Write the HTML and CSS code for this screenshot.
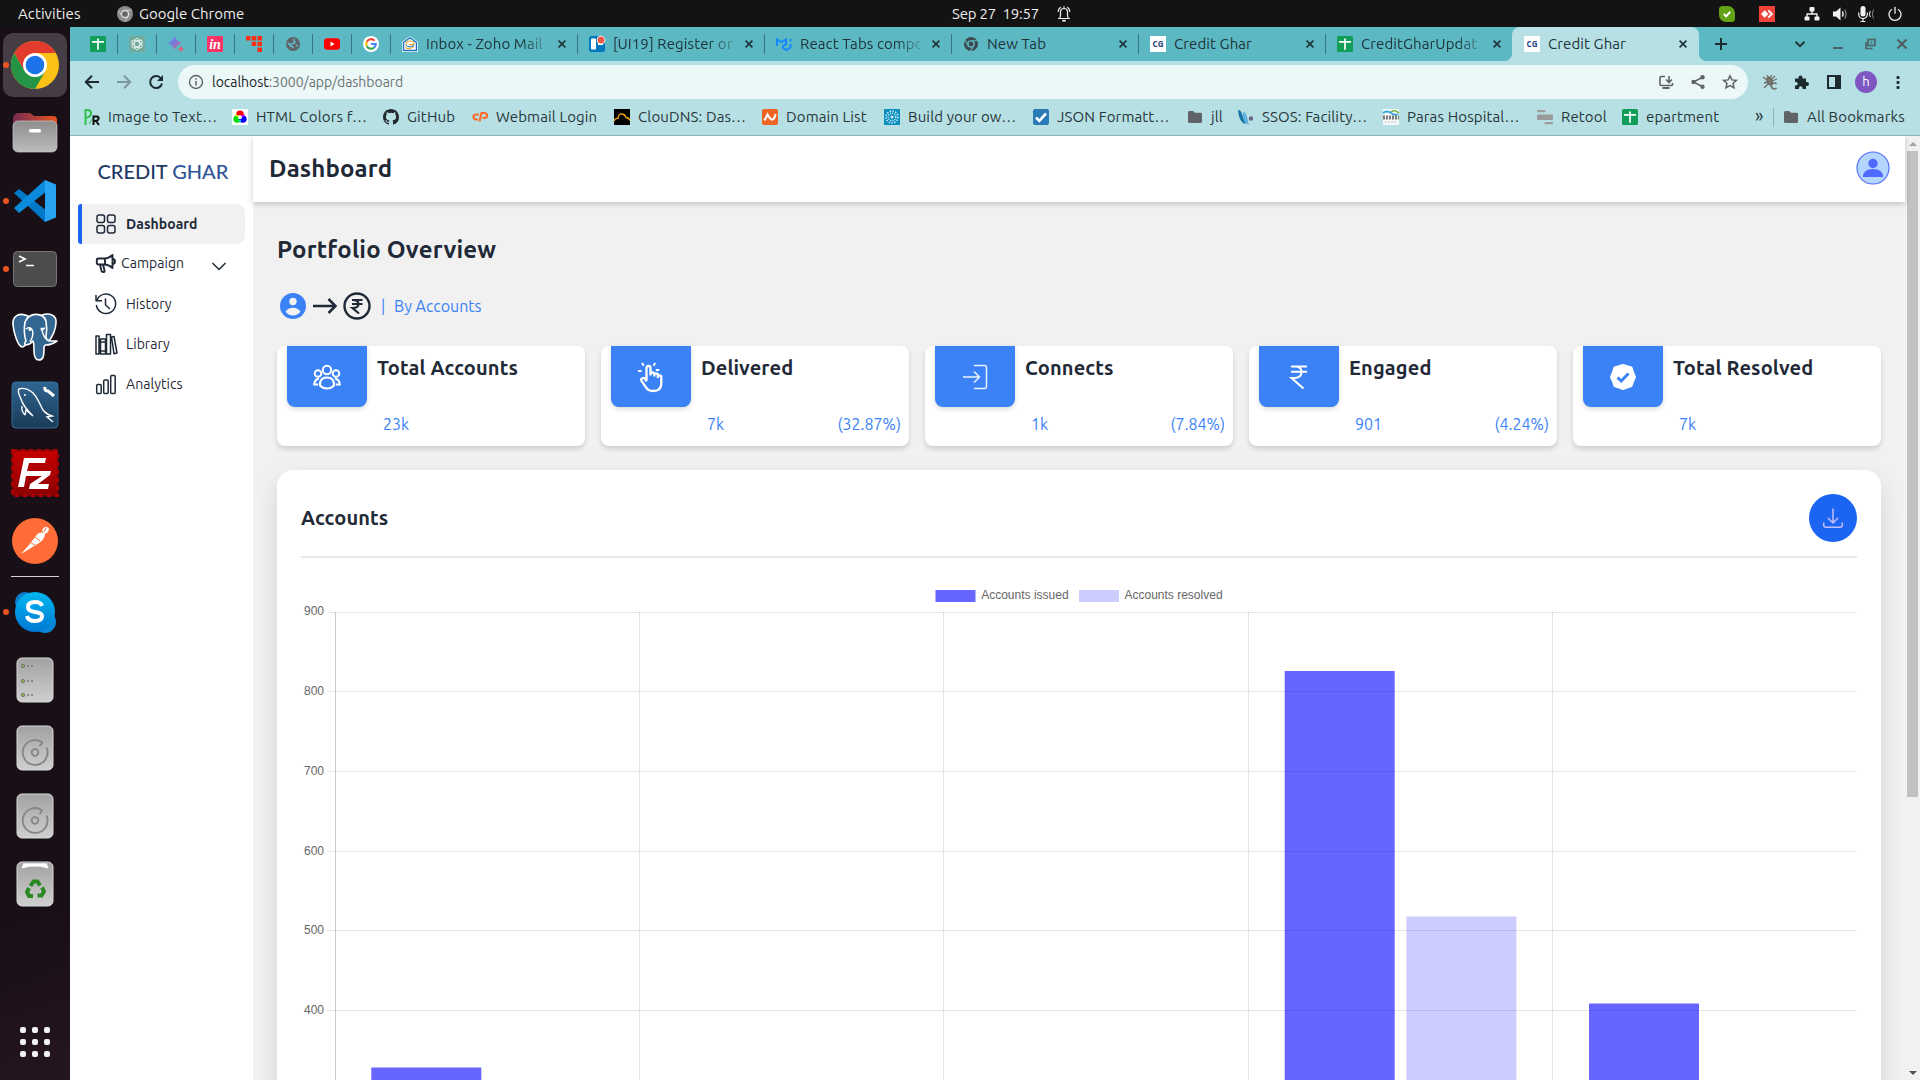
FILE: index.html
```html
<!DOCTYPE html>
<html lang="en">
<head>
<meta charset="utf-8">
<title>Credit Ghar</title>
<link rel="stylesheet" href="styles.css">
</head>
<body>
<svg class="sprite" aria-hidden="true">
  <defs>
    <linearGradient id="g-grey" x1="0" y1="0" x2="0" y2="1"><stop offset="0" stop-color="#a2a2a2"/><stop offset="1" stop-color="#cfcfcf"/></linearGradient>
    <linearGradient id="g-file" x1="0" y1="0" x2="0" y2="1"><stop offset="0" stop-color="#8d8d8d"/><stop offset="1" stop-color="#bcbcbc"/></linearGradient>
    <linearGradient id="g-fold" x1="0" y1="0" x2="1" y2="0"><stop offset="0" stop-color="#762b50"/><stop offset="1" stop-color="#e95420"/></linearGradient>
    <linearGradient id="g-sky" x1="0" y1="0" x2="0" y2="1"><stop offset="0" stop-color="#00b7f0"/><stop offset="1" stop-color="#0078d4"/></linearGradient>
    <linearGradient id="g-my" x1="0" y1="0" x2="0" y2="1"><stop offset="0" stop-color="#2f6592"/><stop offset="1" stop-color="#1a3b57"/></linearGradient>
    <linearGradient id="g-fz" x1="0" y1="0" x2="0" y2="1"><stop offset="0" stop-color="#c80000"/><stop offset="1" stop-color="#8c0000"/></linearGradient>
    <linearGradient id="g-bard" x1="0" y1="0" x2="1" y2="1"><stop offset="0" stop-color="#5b8def"/><stop offset=".5" stop-color="#7d79d8"/><stop offset="1" stop-color="#e0637a"/></linearGradient>
    <symbol id="sheet" viewBox="0 0 16 16"><rect width="16" height="16" rx="1.5" fill="#0f9d58"/><path d="M2 5.900h12M8 2.500v11.300" stroke="#fff" stroke-width="1.700"/></symbol>
    <symbol id="cg" viewBox="0 0 16 16"><rect width="16" height="16" fill="#fff"/><text x="8" y="10.600" font-size="8" font-weight="700" text-anchor="middle" fill="#2a4580" font-family="Open Sans, sans-serif">CG</text></symbol>
    <symbol id="close" viewBox="0 0 16 16"><path d="M4.600 4.600l6.800 6.800M11.400 4.600l-6.800 6.800" stroke="#20343a" stroke-width="1.700" fill="none"/></symbol>
    <symbol id="folder" viewBox="0 0 16 16"><path d="M1 3.500Q1 2 2.500 2h3.700l1.600 1.800h5.700Q15 3.800 15 5.200v7.300q0 1.500-1.500 1.500h-11Q1 14 1 12.500z" fill="#5f6368"/></symbol>
    <symbol id="disk" viewBox="0 0 48 48"><rect x="6" y="2" width="36" height="44" rx="5" fill="url(#g-grey)" stroke="#dadada"/><path d="M31.500 18.500a12.400 12.400 0 1 0 4 5" fill="none" stroke="#858585" stroke-width="1.800"/><circle cx="24" cy="28.500" r="3.300" fill="none" stroke="#858585" stroke-width="1.800"/><path d="M28.500 22l3-3.500" stroke="#858585" stroke-width="1.800"/></symbol>
  </defs>
</svg>

<header class="topbar">
  <span class="tb-activities">Activities</span>
  <svg class="i16" viewBox="0 0 16 16"><circle cx="8" cy="8" r="8" fill="#8b8b8b"/><circle cx="8" cy="8" r="3.600" fill="#666" stroke="#ddd" stroke-width="1.500"/><path d="M8 4.200h7M4.800 10L1.500 4.500M11.300 10L8 16" stroke="#ccc" fill="none"/></svg>
  <span class="tb-app">Google Chrome</span>
  <span class="tb-clock">Sep 27&nbsp; 19:57</span>
  <svg class="tb-bell" viewBox="0 0 16 16" fill="none" stroke="#eee" stroke-width="1.200"><path d="M2 12.500h12M3.500 12.500Q4.500 11 4.500 9V6a3.500 3.500 0 0 1 7 0V9q0 2 1 3.500M7 1h2M2.200 6Q2.500 2.500 4.800 1M13.800 6Q13.500 2.500 11.200 1"/><path d="M6.300 14.700h3.400" stroke-width="1.800"/></svg>
  <div class="tray">
    <svg class="i16 t1" viewBox="0 0 16 16"><path d="M3.500 0h6A7 7 0 0 1 16 7v5.500A3.500 3.500 0 0 1 12.500 16H7A7 7 0 0 1 0 9V3.500A3.500 3.500 0 0 1 3.500 0z" fill="#64a316"/><path d="M4.800 8l2.300 2.300 4.200-4.400" fill="none" stroke="#fff" stroke-width="2"/></svg>
    <svg class="i16 t2" viewBox="0 0 16 16"><rect width="16" height="16" fill="#ef443b"/><path d="M5.700 4.300L9.400 8l-3.700 3.700L2 8z" fill="#fff"/><path d="M9.200 4.300L12.900 8l-3.700 3.700" fill="none" stroke="#fff" stroke-width="1.800"/></svg>
    <svg class="i16 t3" viewBox="0 0 16 16" fill="#f2f2f2"><rect x="5.500" y="1" width="5" height="4.500" rx="1"/><rect x=".5" y="10.500" width="5" height="4" rx="1"/><rect x="10.500" y="10.500" width="5" height="4" rx="1"/><path d="M8 5v3M3 11V8h10v3" fill="none" stroke="#f2f2f2" stroke-width="1.300"/></svg>
    <svg class="i16 t4" viewBox="0 0 16 16"><path d="M1 5.500h3L8.500 1.500v13L4 10.500H1z" fill="#f2f2f2"/><path d="M10.300 5.300q1.800 2.700 0 5.400" stroke="#f2f2f2" stroke-width="1.300" fill="none"/><path d="M12.600 3.500q3 4.500 0 9" stroke="#888" stroke-width="1.200" fill="none"/></svg>
    <svg class="i16 t5" viewBox="0 0 16 16"><rect x="2.500" y="0" width="5" height="10.500" rx="2.500" fill="#f2f2f2"/><path d="M.7 6.500v1.800a4.300 4.300 0 0 0 8.600 0V6.500M5 12.500v3M2.500 15.500h5" stroke="#f2f2f2" stroke-width="1.200" fill="none"/><path d="M12.300 5q-1.800 3 0 6" stroke="#f2f2f2" fill="none"/><path d="M15.500 3.500q-2.500 4.500 0 9" stroke="#888" fill="none"/></svg>
    <svg class="i16" viewBox="0 0 16 16" fill="none" stroke="#f2f2f2" stroke-width="1.300"><path d="M5 3.200a6 6 0 1 0 6 0M8 .8v7"/></svg>
  </div>
</header>

<div class="desktop">
  <aside class="dock">
    <div class="dock-item active running"><svg viewBox="0 0 48 48"><circle cx="24" cy="24" r="24" fill="#fbc116"/><path d="M24 12h20.800A24 24 0 0 0 3.200 12L13.600 30z" fill="#e33b2e"/><path d="M3.200 12A24 24 0 0 0 24 48l10.400-18L13.600 30z" fill="#269447"/><circle cx="24" cy="24" r="12" fill="#fff"/><circle cx="24" cy="24" r="9.300" fill="#1a73e8"/></svg></div>
    <div class="dock-item"><svg viewBox="0 0 48 48"><path d="M2 10a6 6 0 0 1 5-6h12l4 3h19a4 4 0 0 1 4 4v20H2z" fill="url(#g-fold)"/><rect x="2" y="12" width="44" height="31" rx="5" fill="url(#g-file)" stroke="#c9c9c9" stroke-width=".7"/><rect x="18" y="20" width="12" height="3.500" rx="1.500" fill="#fff"/></svg></div>
    <div class="dock-item running"><svg viewBox="0 0 48 48"><path d="M34 45L3 16l5-4 28 22z" fill="#0078c8"/><path d="M34 3L3 31l5 5 28-22z" fill="#0a8bdc"/><path d="M34 3l11 4.500v33L34 45z" fill="#27a3f0"/></svg></div>
    <div class="dock-item running"><svg viewBox="0 0 48 48"><rect x="2.500" y="6.500" width="43" height="35" rx="4" fill="#4c4c4c" stroke="#777"/><path d="M8 11l6 3-6 3M15 20.500h8" fill="none" stroke="#fff" stroke-width="1.700"/></svg></div>
    <div class="dock-item"><svg viewBox="0 0 48 48" stroke="#fff" stroke-width="1.600" stroke-linejoin="round" fill="#336791"><path d="M17 3C8-1 1 3 2 12c1 9 5 21 9 22 3 0 6-5 8-7z"/><path d="M31 2c8-3 15 1 14 8-.5 7-4 14-7 18l-5-2z"/><path d="M14 9C18-1 32-1 35 8c1 6 1 11 0 16 0 5 6 4 11 4-4 3-7 4-11 4-1 0-2 1-2 3 0 9-1 12-5 12-3 0-5-2-5-9 0-4 0-8-1-10-5 6-11 4-7 0-2-6-2-13-1-19z"/><path d="M15 16c7-5 9 5 4 13M34 15c-5 1-2 7 1 11" fill="none" stroke-width="1.400"/><circle cx="19" cy="16.500" r=".8"/><circle cx="31" cy="16" r=".8"/></svg></div>
    <div class="dock-item"><svg viewBox="0 0 48 48"><rect x="1" y="1" width="46" height="46" rx="4" fill="url(#g-my)" stroke="#30709f"/><path d="M14 34l1-5 7 6C17 30 11 22 10 18c-2-4-4-8-2-10 5-2 11 1 14 4 5 5 7 12 10 17q3 4 9 6l-5 1 6 5M14 34q-4-4-3-9" fill="none" stroke="#fff" stroke-width="1.400"/><circle cx="14" cy="14" r="1" fill="#fff"/><path d="M34 6q-1 4 3 4l6 5" fill="none" stroke="#fff" stroke-width="3"/></svg></div>
    <div class="dock-item"><svg viewBox="0 0 48 48"><rect x="1.500" y="1.500" width="45" height="45" fill="url(#g-fz)" stroke="#a80000" stroke-width="3" stroke-dasharray="5 3"/><path d="M13 9h22l-1 5H18l-2 8h13l-1 5H15l-2 11H7z" fill="#fff"/><path d="M22 22h18l-1 4-12 9h11l-1 5H18l1-5 12-8H21z" fill="#fff"/></svg></div>
    <div class="dock-item"><svg viewBox="0 0 48 48"><circle cx="24" cy="24" r="23" fill="#ff6c37"/><path d="M38 12a3.500 3.500 0 1 0-5 4.500q-3-2.500-7 1L18 28l-8 9 10-6 8-5q6-4 6-9.500 3 0 4-4.500z" fill="#fff"/><path d="M24 20l5 4M20 26l4 2M35 11l-2 4" stroke="#ff6c37"/></svg></div>
    <div class="dock-sep"></div>
    <div class="dock-item running"><svg viewBox="0 0 48 48"><circle cx="14" cy="14" r="10" fill="#0a7cc9"/><circle cx="34" cy="34" r="11" fill="#0a86d8"/><circle cx="24" cy="24" r="20" fill="url(#g-sky)"/><path d="M31 18q-1-4-7-4-7 0-7 5 0 4 7 5t7 4q0 5-7 5t-8-5" fill="none" stroke="#fff" stroke-width="4"/></svg></div>
    <div class="dock-item"><svg viewBox="0 0 48 48"><rect x="6" y="2" width="36" height="44" rx="5" fill="url(#g-grey)" stroke="#dadada"/><g fill="#8bb04a" stroke="#777"><circle cx="12" cy="10" r="1.700"/><circle cx="12" cy="25" r="1.700"/><circle cx="12" cy="39" r="1.700"/></g><path d="M16 10h6M16 25h6M16 39h6" stroke="#777" stroke-width="1.700" stroke-dasharray="2 2"/></svg></div>
    <div class="dock-item"><svg><use href="#disk"/></svg></div>
    <div class="dock-item"><svg><use href="#disk"/></svg></div>
    <div class="dock-item"><svg viewBox="0 0 48 48"><rect x="6" y="2" width="36" height="44" rx="5" fill="url(#g-grey)" stroke="#dadada"/><path d="M10 9l2-6h24l2 6-9-2H19z" fill="#fff" stroke="#999" stroke-width=".6"/><g fill="none" stroke="#2a8a22" stroke-width="4"><path d="M19.500 26l3-4.500h4l2.500 4"/><path d="M31 27.500l2 4-2.500 4h-4"/><path d="M22 36h-4l-2-4 2-4"/></g></svg></div>
    <div class="dock-item apps"><svg viewBox="0 0 48 48" fill="#f2f2f2"><rect x="9" y="9" width="6" height="6" rx="2"/><rect x="21" y="9" width="6" height="6" rx="2"/><rect x="33" y="9" width="6" height="6" rx="2"/><rect x="9" y="21" width="6" height="6" rx="2"/><rect x="21" y="21" width="6" height="6" rx="2"/><rect x="33" y="21" width="6" height="6" rx="2"/><rect x="9" y="33" width="6" height="6" rx="2"/><rect x="21" y="33" width="6" height="6" rx="2"/><rect x="33" y="33" width="6" height="6" rx="2"/></svg></div>
  </aside>

  <div class="browser">
    <nav class="tabs">
      <div class="tab pinned"><svg class="i16"><use href="#sheet"/></svg></div>
      <div class="tab pinned"><svg class="i16" viewBox="0 0 16 16"><rect width="16" height="16" rx="1.500" fill="#74aa9c"/><g fill="none" stroke="#e8f4f1" stroke-width=".9"><ellipse cx="8" cy="8" rx="2.800" ry="5.700"/><ellipse cx="8" cy="8" rx="2.800" ry="5.700" transform="rotate(60 8 8)"/><ellipse cx="8" cy="8" rx="2.800" ry="5.700" transform="rotate(120 8 8)"/></g></svg></div>
      <div class="tab pinned"><svg class="i16" viewBox="0 0 16 16" fill="url(#g-bard)"><path d="M6.500 0Q8.500 5 13.500 7 8.500 9 6.500 13.500 4.500 9 0 7 4.500 5 6.500 0z"/><path d="M13 10q.9 2.100 3 3-2.100.9-3 3-.9-2.100-3-3 2.100-.9 3-3z" fill="#d9657f"/></svg></div>
      <div class="tab pinned"><svg class="i16" viewBox="0 0 16 16"><rect width="16" height="16" rx="1" fill="#ff3366"/><text x="8" y="12.500" text-anchor="middle" font-size="14" font-weight="700" font-style="italic" fill="#fff" font-family="Liberation Serif, serif">in</text></svg></div>
      <div class="tab pinned"><svg class="i16" viewBox="0 0 16 16" fill="#ff2d17"><path d="M0 0h4.500v4.500H0zM5.700 0h4.500v4.500H5.700zM11.400 0H16v4.500h-4.600zM5.700 5.700h4.500v4.300H5.700zM11.400 5.700H16v4.300h-4.600zM11.400 11.400H16V16h-4.600z"/></svg></div>
      <div class="tab pinned"><svg class="i16" viewBox="0 0 16 16"><circle cx="8" cy="8" r="7" fill="#5f6368"/><path d="M9.500 3Q8 4.500 9.500 5.500T8 7.500 4 8q1 2 3 2.500T7.500 12M11.500 8.500l.8 2" stroke="#5cb8c2" stroke-width="1.700" fill="none"/></svg></div>
      <div class="tab pinned"><svg class="i16" viewBox="0 0 16 16"><rect y="2.300" width="16" height="11.500" rx="3" fill="#f00"/><path d="M6.500 5.600v4.800L10.600 8z" fill="#fff"/></svg></div>
      <div class="tab pinned"><svg class="i16" viewBox="0 0 16 16"><circle cx="8" cy="8" r="8" fill="#fff"/><g fill="none" stroke-width="2.200"><path d="M11.500 4.700A4.800 4.800 0 0 0 3.800 5.700" stroke="#ea4335"/><path d="M3.800 5.700a4.800 4.800 0 0 0 0 4.600" stroke="#fbbc05"/><path d="M3.800 10.300a4.800 4.800 0 0 0 7.300 1.300" stroke="#34a853"/><path d="M11.100 11.600A4.800 4.800 0 0 0 12.800 8H8" stroke="#4285f4"/></g></svg></div>
      <div class="tab"><svg class="i16" viewBox="0 0 16 16"><path d="M0 6l8-6 8 6v10H0z" fill="#fff"/><path d="M1.500 6.500L8 1.700l6.500 4.800v8h-13z" fill="none" stroke="#1a73c8" stroke-width="1.400"/><path d="M4 9q0-4 4-4t4 2q0 2-5 1.500M3 11.500q6 3 9-1.500" fill="none" stroke="#f2a92c" stroke-width="1.200"/><path d="M3.500 9Q8 13 12.500 8.500" fill="none" stroke="#1a73c8"/></svg><span class="tab-title fade">Inbox - Zoho Mail</span><svg class="i16"><use href="#close"/></svg></div>
      <div class="tab"><svg class="i16" viewBox="0 0 16 16"><rect width="16" height="16" rx="2" fill="#0079bf"/><rect x="2" y="2.500" width="5" height="11" rx=".8" fill="#fff"/><path d="M9 6h5v3H9z" fill="#fff"/><circle cx="12" cy="4" r="4" fill="#eb5a46" stroke="#fff" stroke-width=".8"/></svg><span class="tab-title fade">[UI19] Register on</span><svg class="i16"><use href="#close"/></svg></div>
      <div class="tab"><svg class="i16" viewBox="0 0 16 16" fill="none" stroke="#1389fd" stroke-width="2"><path d="M1 10V3.500l4.500 2.700L10 3.500V8.500L7 10v2l3.500 2 4-2.500V8M14.500 3v2.500"/></svg><span class="tab-title fade">React Tabs compo</span><svg class="i16"><use href="#close"/></svg></div>
      <div class="tab"><svg class="i16" viewBox="0 0 16 16"><circle cx="8" cy="8" r="7" fill="#3c4a50"/><circle cx="8" cy="8" r="3.100" fill="#3c4a50" stroke="#5cb8c2" stroke-width="1.400"/><path d="M8 4.800h6.500M5.300 9.600L2 4M10.700 9.600L7.500 15.200" stroke="#5cb8c2" stroke-width="1.100"/></svg><span class="tab-title">New Tab</span><svg class="i16"><use href="#close"/></svg></div>
      <div class="tab"><svg class="i16"><use href="#cg"/></svg><span class="tab-title">Credit Ghar</span><svg class="i16"><use href="#close"/></svg></div>
      <div class="tab last"><svg class="i16"><use href="#sheet"/></svg><span class="tab-title fade">CreditGharUpdat</span><svg class="i16"><use href="#close"/></svg></div>
      <div class="tab current"><svg class="i16"><use href="#cg"/></svg><span class="tab-title">Credit Ghar</span><svg class="i16"><use href="#close"/></svg></div>
      <svg class="new-tab" viewBox="0 0 16 16"><path d="M8 2v12M2 8h12" stroke="#1c2d31" stroke-width="2"/></svg>
      <div class="win">
        <svg class="i16" viewBox="0 0 16 16"><path d="M3.500 5.800L8 10.200l4.500-4.400" fill="none" stroke="#22343a" stroke-width="2"/></svg>
        <svg class="i16" viewBox="0 0 16 16"><path d="M3 12h10" stroke="#4e6165" stroke-width="2"/></svg>
        <svg class="i16" viewBox="0 0 16 16" fill="none" stroke="#4e6165" stroke-width="1.700"><rect x="6" y="3.500" width="7" height="6"/><path d="M4 6v6.500h6.500M8.500 6.500h2"/></svg>
        <svg class="i16" viewBox="0 0 16 16"><path d="M3.500 3.500l9 9M12.500 3.500l-9 9" stroke="#4e6165" stroke-width="2.200"/></svg>
      </div>
    </nav>

    <div class="toolbar">
      <svg class="nav-i" viewBox="0 0 16 16" fill="none" stroke="#1d2b2f" stroke-width="2"><path d="M15 8H2.500M8 1.800L1.800 8 8 14.200"/></svg>
      <svg class="nav-i" viewBox="0 0 16 16" fill="none" stroke="#7d989c" stroke-width="2"><path d="M1 8h12.500M8 1.800L14.200 8 8 14.200"/></svg>
      <svg class="nav-i" viewBox="0 0 16 16"><path d="M13 4.500A6 6 0 1 0 14 9.500" fill="none" stroke="#1d2b2f" stroke-width="2"/><path d="M15 1v6H9z" fill="#1d2b2f"/></svg>
      <div class="omnibox">
        <svg class="i16" viewBox="0 0 16 16"><circle cx="8" cy="8" r="6.500" fill="none" stroke="#5f6368" stroke-width="1.400"/><path d="M8 7v4.500M8 4.300v1.500" stroke="#5f6368" stroke-width="1.500"/></svg>
        <span class="url"><b>localhost</b>:3000/app/dashboard</span>
        <svg class="i16" viewBox="0 0 16 16" fill="none" stroke="#5f6368" stroke-width="1.600"><path d="M7 2.500H3Q2 2.500 2 3.500v7q0 1 1 1h10.500q1 0 1-1V9M11 2v6M8 5.500l3 3 3-3"/><path d="M4.500 14h7" stroke-width="2"/></svg>
        <svg class="i16" viewBox="0 0 16 16"><path d="M13 3L3.500 8l9.500 5" fill="none" stroke="#5f6368" stroke-width="1.500"/><g fill="#5f6368"><circle cx="12.500" cy="3.300" r="2.200"/><circle cx="3.500" cy="8" r="2.200"/><circle cx="12.500" cy="12.700" r="2.200"/></g></svg>
        <svg class="i16" viewBox="0 0 16 16"><path d="M8 1.800l1.900 4.100 4.500.5-3.400 3 1 4.400L8 11.500l-4 2.300 1-4.400-3.400-3 4.500-.5z" fill="none" stroke="#5f6368" stroke-width="1.500"/></svg>
      </div>
      <svg class="i16" viewBox="0 0 16 16" fill="none" stroke="#6c6c66" stroke-width="1.300"><path d="M1 3l4 3M2 9l4-1M2 14l4-4M13 2l-4 4M5 1l2 3M10 1L8 4M15 5l-5 2"/><ellipse cx="7.500" cy="7" rx="2.500" ry="4" fill="#77756a" transform="rotate(-20 7.500 7)"/><path d="M14.500 10a3 3 0 1 0 0 4" stroke-width="1.600"/></svg>
      <svg class="i16" viewBox="0 0 16 16"><path d="M1 4.500h3.500v-1a2 2 0 0 1 4 0v1H12V8h1a2 2 0 0 1 0 4h-1v3H8.500v-1a1.800 1.800 0 0 0-3.600 0v1H1v-3.500h1a1.800 1.800 0 0 0 0-3.600H1z" fill="#1d2b2f"/></svg>
      <svg class="i16" viewBox="0 0 16 16"><rect x="2" y="2" width="12" height="12" fill="none" stroke="#1d2b2f" stroke-width="2"/><path d="M9 2h5v12H9z" fill="#1d2b2f"/></svg>
      <span class="profile">h</span>
      <svg class="i16 dots" viewBox="0 0 16 16" fill="#1d2b2f"><rect x="6.500" y="2" width="3" height="3" rx="1"/><rect x="6.500" y="7" width="3" height="3" rx="1"/><rect x="6.500" y="12" width="3" height="3" rx="1"/></svg>
    </div>

    <div class="bookmarks">
      <span class="bm"><svg class="i16" viewBox="0 0 16 16" fill="none" stroke-width="2"><path d="M1.500 16V1h3q3 1 2.500 4T1.500 9" stroke="#2fc04c"/><path d="M9.500 16V7.500H13q2 .5 1.500 2.500T9.500 12M12 12l3 4" stroke="#111"/><path d="M5 15l3-5" stroke="#2fc04c" stroke-width="1"/></svg><span>Image to Text…</span></span>
      <span class="bm"><svg class="i16" viewBox="0 0 16 16"><rect width="16" height="16" fill="#fff"/><circle cx="8" cy="5.300" r="3.800" fill="#f00"/><circle cx="5.200" cy="10" r="3.800" fill="#0d0"/><circle cx="10.800" cy="10" r="3.800" fill="#00f"/><path d="M3 5l2 3 2-1z" fill="#ff0"/><path d="M13 5l-2 3-2-1z" fill="#f0f"/><path d="M8 14l-1-3h2z" fill="#0ff"/><circle cx="8" cy="8.300" r="2" fill="#fff"/></svg><span>HTML Colors f…</span></span>
      <span class="bm"><svg class="i16" viewBox="0 0 16 16"><path fill="#24292f" d="M8 0C3.580 0 0 3.580 0 8c0 3.540 2.290 6.530 5.470 7.590.4.070.55-.17.55-.38 0-.19-.01-.82-.01-1.490-2.010.37-2.530-.49-2.690-.94-.09-.23-.48-.94-.82-1.130-.28-.15-.68-.52-.01-.53.63-.01 1.080.58 1.230.82.72 1.210 1.870.87 2.330.66.07-.52.28-.87.51-1.070-1.780-.2-3.640-.89-3.640-3.950 0-.87.31-1.590.82-2.150-.08-.2-.36-1.020.08-2.120 0 0 .67-.21 2.200.82a7.600 7.600 0 0 1 4 0c1.530-1.040 2.200-.82 2.200-.82.44 1.100.16 1.920.08 2.120.51.56.82 1.270.82 2.150 0 3.070-1.870 3.750-3.650 3.950.29.25.54.73.54 1.480 0 1.070-.01 1.930-.01 2.200 0 .21.15.46.55.38A8.010 8.010 0 0 0 16 8c0-4.420-3.580-8-8-8z"/></svg><span>GitHub</span></span>
      <span class="bm"><svg class="i16" viewBox="0 0 16 16" fill="none" stroke="#ff6c2c" stroke-width="2.200"><path d="M7 5.500H4a2.500 2.500 0 0 0 0 5h2M7.500 12.500L9.500 4h3a2.300 2.300 0 0 1 0 5h-2"/></svg><span>Webmail Login</span></span>
      <span class="bm"><svg class="i16" viewBox="0 0 16 16"><rect width="16" height="16" fill="#000"/><path d="M0 12Q1 9 4 9.500 4.500 4.500 8 5t4 3.500q3 0 4 3" fill="none" stroke="#f5a31a" stroke-width="1.300"/></svg><span>ClouDNS: Das…</span></span>
      <span class="bm"><svg class="i16" viewBox="0 0 16 16"><rect width="16" height="16" rx="2" fill="#ee6423"/><path d="M2.500 11.500l3-6q3 5.500 5 5t3-5.500" fill="none" stroke="#fff" stroke-width="2.200"/></svg><span>Domain List</span></span>
      <span class="bm"><svg class="i16" viewBox="0 0 16 16"><rect width="16" height="16" fill="#0d8fc0"/><g fill="none" stroke="#d8f2fb"><circle cx="8" cy="8" r="6" stroke-width="1.500" stroke-dasharray="1.300 1.500"/><circle cx="8" cy="8" r="3.800" stroke-width="1.500" stroke-dasharray="1 1.200"/></g><circle cx="8" cy="8" r="1.500" fill="#d8f2fb"/></svg><span>Build your ow…</span></span>
      <span class="bm"><svg class="i16" viewBox="0 0 16 16"><rect width="16" height="16" rx="2" fill="#2a7ab8"/><path d="M3 8.500l3.300 3.300L13 4.500" fill="none" stroke="#fff" stroke-width="2.600"/></svg><span>JSON Formatt…</span></span>
      <span class="bm"><svg class="i16"><use href="#folder"/></svg><span>jll</span></span>
      <span class="bm"><svg class="i16" viewBox="0 0 16 16"><path d="M0 1q3 0 4 4t4 10Q1 14 0 1z" fill="#1673a8"/><path d="M5 3q3 0 4 5t2 8Q4 14 5 3z" fill="#5fb0dc"/><circle cx="13" cy="9.500" r="2.200" fill="#668"/></svg><span>SSOS: Facility…</span></span>
      <span class="bm"><svg class="i16" viewBox="0 0 16 16"><rect width="16" height="16" fill="#f6f8f8"/><path d="M0 4q4-3 8 0t7 1" stroke="#35a5d8" stroke-width="2" fill="none"/><path d="M8 3q4-3 8 1" stroke="#71b544" stroke-width="1.600" fill="none"/><path d="M0 8.500h16" stroke="#777" stroke-width="4" stroke-dasharray="2 1"/><path d="M2 13h12" stroke="#bbb" stroke-dasharray="2 1"/></svg><span>Paras Hospital…</span></span>
      <span class="bm"><svg class="i16" viewBox="0 0 16 16" fill="#9b9b9b"><rect x="0" y="1" width="8.500" height="2.300" rx="1"/><rect x="0" y="5.500" width="16" height="5.500" rx="1"/><rect x="7.500" y="13" width="8.500" height="2.300" rx="1"/></svg><span>Retool</span></span>
      <span class="bm"><svg class="i16"><use href="#sheet"/></svg><span>epartment</span></span>
      <span class="bm-more">»</span>
      <span class="bm all"><svg class="i16"><use href="#folder"/></svg><span>All Bookmarks</span></span>
    </div>

    <div class="page">
      <aside class="sidebar">
        <div class="logo">CREDIT <span>GHAR</span></div>
        <a class="nav-item selected"><svg class="nav-icon" viewBox="0 0 22 22"><rect x="2" y="2" width="7.500" height="7.500" rx="2"/><rect x="12.500" y="2" width="7.500" height="7.500" rx="2"/><rect x="2" y="12.500" width="7.500" height="7.500" rx="2"/><rect x="12.500" y="12.500" width="7.500" height="7.500" rx="2"/></svg>Dashboard</a>
        <a class="nav-item campaign"><svg class="nav-icon" viewBox="0 0 22 22"><path d="M3.500 6.500h6q4 0 8-3.500v13q-4-3.500-8-3.500h-6Q1.800 12.500 1.800 11V8q0-1.500 1.700-1.500zM10 6.500v6M17.500 7q2.500 0 2.500 2.500T17.500 12M5 12.500L6.500 19q.3 1.300 2.500 1 .8-.3.500-1.500L8 12.500"/></svg>Campaign<svg class="chev" viewBox="0 0 16 16"><path d="M1.500 5L8 11.500 14.500 5"/></svg></a>
        <a class="nav-item"><svg class="nav-icon" viewBox="0 0 22 22"><path d="M1.800 7.500A9.700 9.700 0 1 1 1.400 12.500M1 2.500v5.300h5.500M10.500 6v6l4 3.500"/></svg>History</a>
        <a class="nav-item"><svg class="nav-icon" viewBox="0 0 22 22"><path d="M1 3h3v18H1zM5.500 6h5v15h-5zM5.500 9h5M5.500 18h5M11.500 1.500h4V21h-4zM16.500 4l2.500-.5L22 20l-3 .7z"/></svg>Library</a>
        <a class="nav-item"><svg class="nav-icon" viewBox="0 0 22 22"><rect x="1.700" y="11.500" width="4.500" height="9" rx="1"/><rect x="8.700" y="7" width="4.500" height="13.500" rx="1"/><rect x="15.700" y="2.500" width="4.500" height="18" rx="1"/></svg>Analytics</a>
      </aside>

      <div class="main">
        <div class="page-head">
          <h1>Dashboard</h1>
          <svg class="avatar" viewBox="0 0 34 34"><circle cx="17" cy="17" r="16" fill="#b4d6fe" stroke="#5570f8" stroke-width="1.200"/><circle cx="17" cy="12.500" r="4.700" fill="#4f6bff"/><path d="M7 26q0-8 10-8t10 8z" fill="#4f6bff"/></svg>
        </div>
        <div class="content">
          <h2>Portfolio Overview</h2>
          <div class="mode">
            <svg class="m-user" viewBox="0 0 26 26"><circle cx="13" cy="13" r="13" fill="#3b82f6"/><circle cx="13" cy="8.500" r="3.700" fill="#f1f1f1"/><path d="M5.500 18.500q2.500-3.800 7.500-3.800t7.500 3.800q-2.800 4-7.500 4t-7.500-4z" fill="#f1f1f1"/></svg>
            <svg class="m-arrow" viewBox="0 0 24 20" fill="none" stroke="#1f2937" stroke-width="2.500"><path d="M0 10h22M15.500 3l7 7-7 7"/></svg>
            <svg class="m-rupee" viewBox="0 0 28 28" fill="none" stroke="#1f2937" stroke-width="2.400"><circle cx="14" cy="14" r="12.500"/><path d="M9 8h10.500M9 12h10.500M9.500 8q6 0 6 4t-6 4l6.500 5.500" stroke-width="2.200"/></svg>
            <span class="bar">|</span><span>By Accounts</span>
          </div>

          <div class="cards">
            <div class="card">
              <div class="badge"><svg viewBox="0 0 28 28"><circle cx="14" cy="7" r="4.200"/><circle cx="5" cy="10.500" r="3.300"/><circle cx="23" cy="10.500" r="3.300"/><path d="M7 22.500q-.5-8 7-8t7 8q-3 3-7 3t-7-3zM6 15.500q-4.500 1-4.800 6h4M22 15.500q4.500 1 4.800 6h-4"/></svg></div>
              <h3>Total Accounts</h3><div class="vals"><span>23k</span></div>
            </div>
            <div class="card">
              <div class="badge"><svg viewBox="0 0 28 28"><path d="M9.500 18V5q0-2 2-2t2 2v7.500V11q0-1.600 1.900-1.600T17.300 11v2.500V12q0-1.500 1.800-1.500t1.800 1.500v3-1.200q0-1.300 1.700-1.300t1.700 1.500v6.500q0 7.500-8 7.500-5.500 0-7.500-4L4.500 18q-1-2 .8-2.800t2.700.8l1.500 2.500" stroke-width="2.300"/><path d="M5 0l1.800 2.700M1 8h3.500M16.500 2.700L18.300 0M18.800 7h3.500" stroke-width="2"/></svg></div>
              <h3>Delivered</h3><div class="vals"><span>7k</span><span>(32.87%)</span></div>
            </div>
            <div class="card">
              <div class="badge"><svg viewBox="0 0 28 28" class="thin"><path d="M13 2.500h10.500q2 0 2 2v19q0 2-2 2H13M2 14h16M13 8.500l5.500 5.500-5.500 5.500"/></svg></div>
              <h3>Connects</h3><div class="vals"><span>1k</span><span>(7.84%)</span></div>
            </div>
            <div class="card">
              <div class="badge"><svg viewBox="0 0 28 28"><path d="M6 3.500h16M6 8.700h16M6 3.500h4q6.500 0 6.500 5.500T10 15H6.500L18.500 25.500"/></svg></div>
              <h3>Engaged</h3><div class="vals"><span>901</span><span>(4.24%)</span></div>
            </div>
            <div class="card">
              <div class="badge"><svg viewBox="0 0 28 28"><path d="M14 2l4.200 1.300 4.300 1.200L24 9l2 5-2 4.500-1.500 4.500-4.500 1.500-4 1.500-4-1.500L5.500 23 4 18.500 2 14l2-5 1.500-4.500L9.800 3.300z" fill="#fff" stroke="#fff" stroke-linejoin="round"/><path d="M8.500 14.500l3.700 3.500 7.300-7.500" stroke="#3b82f6" stroke-width="3"/></svg></div>
              <h3>Total Resolved</h3><div class="vals"><span>7k</span></div>
            </div>
          </div>

          <section class="panel">
            <div class="panel-head">
              <h3>Accounts</h3>
              <span class="download"><svg viewBox="0 0 20 20"><path d="M10 .5v14M5 10l5 5 5-5M.700 14.500V17q0 2.300 2.300 2.300h14q2.300 0 2.300-2.300v-2.500"/></svg></span>
            </div>
            <svg class="chart" viewBox="0 0 1556 522" width="1556" height="522">
              <g stroke="#000" stroke-opacity=".1">
                <path d="M26 54.500h1530M26 133.500h1530M26 213.500h1530M26 293.500h1530M26 372.500h1530M26 452.500h1530"/>
                <path d="M34.500 54v468" stroke-opacity=".2"/><path d="M338.500 54v468M642.500 54v468M947.500 54v468M1251.500 54v468"/>
              </g>
              <g fill="#00f" fill-opacity=".6"><rect x="634.500" y="32" width="40" height="12"/><rect x="70.300" y="509.500" width="110" height="13"/><rect x="983.700" y="113" width="110" height="409"/><rect x="1288" y="445.500" width="110" height="77"/></g>
              <g fill="#00f" fill-opacity=".2"><rect x="778" y="32" width="40" height="12"/><rect x="1105.400" y="358.500" width="110" height="164"/></g>
              <g class="lbl"><text x="680.200" y="41">Accounts issued</text><text x="823.500" y="41">Accounts resolved</text></g>
              <g class="lbl" text-anchor="end"><text x="23" y="57">900</text><text x="23" y="137">800</text><text x="23" y="217">700</text><text x="23" y="297">600</text><text x="23" y="376">500</text><text x="23" y="456">400</text></g>
            </svg>
          </section>
        </div>
      </div>

      <div class="scrollbar"><span class="arrow up"></span><span class="thumb"></span><span class="arrow down"></span></div>
    </div>
  </div>
</div>
</body>
</html>
```
FILE: styles.css
```css
* { box-sizing: border-box; }
body { margin: 0; width: 1920px; height: 1080px; overflow: hidden; font-family: Ubuntu, "Noto Sans", "Open Sans", sans-serif; font-size: 14px; color: #1f2937; background: #fff; }
h1, h2, h3 { margin: 0; font-weight: 700; }
svg { display: block; flex: none; overflow: visible; }
.sprite { position: absolute; width: 0; height: 0; }
.i16 { width: 16px; height: 16px; }

/* GNOME top bar */
.topbar { height: 27px; background: #131313; color: #eee; display: flex; align-items: center; font-size: 15px; white-space: nowrap; }
.tb-activities { width: 99px; padding-left: 18px; letter-spacing: .1px; }
.tb-app { width: 813px; padding-left: 6px; }
.topbar > .i16 { margin-left: 18px; }
.tb-clock { width: 88px; margin-left: 6px; letter-spacing: -.2px; }
.tb-bell { width: 16px; height: 16px; margin-left: 16px; }
.tray { display: flex; margin-left: auto; padding-right: 17px; }
.t1 { margin-right: 24px; }
.t2 { margin-right: 29px; }
.t3 { margin-right: 12px; }
.t4 { margin-right: 10px; }
.t5 { margin-right: 13px; }

.desktop { display: flex; height: 1053px; }

/* Dock */
.dock { width: 70px; background: linear-gradient(160deg, #190f16 0 84%, #25151f 100%); padding: 6px 3px 6px; display: flex; flex-direction: column; flex: none; }
.dock-item { position: relative; width: 64px; height: 64px; margin-bottom: 4px; display: flex; align-items: center; justify-content: center; flex: none; border-radius: 10px; }
.dock-item svg { width: 48px; height: 48px; }
.dock-item.active { background: #463c44; }
.dock-item.running::before { content: ""; position: absolute; left: 0; top: 29px; width: 6px; height: 6px; border-radius: 50%; background: #e95420; }
.dock-sep { width: 48px; height: 1px; background: #d5d2d4; margin: -1px auto 3px; flex: none; }
.apps { margin-top: auto; margin-bottom: 0; }

/* Browser chrome */
.browser { flex: 1; display: flex; flex-direction: column; min-width: 0; background: #b7e0e4; }
.tabs { height: 34px; background: #5cb8c2; display: flex; padding-left: 9px; flex: none; color: #20343a; }
.tab { position: relative; width: 187px; height: 34px; display: flex; align-items: center; padding: 0 8px 0 11px; flex: none; }
.tab::after { content: ""; position: absolute; right: 0; top: 7px; width: 1px; height: 20px; background: #37767e; }
.tab.last { width: 186px; padding-right: 7px; }
.tab.last::after, .tab.current::after { display: none; }
.pinned { width: 39px; }
.tab-title { margin-left: 8px; padding-bottom: 2px; white-space: nowrap; font-size: 15px; letter-spacing: .1px; }
.fade { width: 120px; -webkit-mask-image: linear-gradient(90deg, #000 80%, transparent 106%); mask-image: linear-gradient(90deg, #000 80%, transparent 106%); }
.tab > .tab-title + .i16 { margin-left: auto; }
.tab.current { background: #b7e0e4; border-radius: 8px 8px 0 0; padding-left: 12px; }
.tab.current::before { content: ""; position: absolute; left: -8px; right: -8px; bottom: 0; height: 8px; background: radial-gradient(circle at 0 0, transparent 8px, #b7e0e4 8.500px) 0 0 / 8px 8px no-repeat, radial-gradient(circle at 100% 0, transparent 8px, #b7e0e4 8.500px) 100% 0 / 8px 8px no-repeat; }
.new-tab { width: 16px; height: 16px; margin: 9px 0 0 14px; }
.win { display: flex; align-items: center; margin-left: auto; padding-right: 10px; gap: 16px; }
.win .i16:first-child { margin-right: 6px; }

.toolbar { height: 38px; display: flex; align-items: center; padding: 4px 14px 0; flex: none; }
.nav-i { width: 16px; height: 16px; margin-right: 16px; }
.omnibox { width: 1570px; height: 34px; margin: 0 14px 0 -2px; padding: 0 10px; display: flex; align-items: center; gap: 16px; border-radius: 17px; background: #ecf7f8; flex: none; }
.omnibox .url { flex: 1; margin-left: -8px; color: #6b7376; font-size: 14px; letter-spacing: -.03px; }
.url b { font-weight: 400; color: #202124; }
.toolbar > .i16 { margin-right: 16px; }
.profile { width: 22px; height: 22px; margin: 0 13px 0 -3px; border-radius: 50%; background: #7e57c2; color: #fff; text-align: center; line-height: 21px; font-size: 13px; flex: none; }
.toolbar > .dots { margin-right: 0; }

.bookmarks { height: 37px; border-bottom: 1px solid #8fb2b9; display: grid; grid-template-columns: 148px 151px 89px 142px 148px 122px 149px 154px 51px 145px 154px 85px 133px 18px 133px; align-items: center; padding-left: 14px; flex: none; font-size: 15px; letter-spacing: .13px; color: #27363a; }
.bm { display: flex; align-items: center; gap: 8px; white-space: nowrap; }
.bm span { padding-bottom: 2px; }
.bm.all { border-left: 1px solid #8fb2b9; padding-left: 9px; }
.bm-more { font-size: 18px; line-height: 16px; padding-bottom: 4px; }

/* Page */
.page { flex: 1; display: flex; min-height: 0; background: #f1f1f1; overflow: hidden; }
.sidebar { width: 183px; background: #fff; padding: 0 8px; flex: none; }
.logo { height: 68px; padding: 21px 0 0 19.5px; font-family: Lato, sans-serif; font-size: 20px; line-height: 28px; font-weight: 500; color: #1f3864; white-space: nowrap; }
.logo span { color: #2f5597; }
.nav-item { display: flex; align-items: center; height: 40px; padding-left: 17px; font-size: 14px; letter-spacing: .05px; }
.nav-item.selected { font-weight: 700; background: #f1f1f1; border-radius: 3px 8px 8px 3px; border-left: 4px solid #1c64f2; padding-left: 13px; width: 167px; }
.nav-icon { width: 22px; height: 22px; margin-right: 9px; fill: none; stroke: #1f2937; stroke-width: 1.500; stroke-linecap: round; stroke-linejoin: round; }
.campaign { padding-bottom: 2px; }
.campaign .nav-icon { margin-right: 4px; stroke-width: 1.900; }
.chev { width: 16px; height: 16px; margin: 6px 18px 0 auto; fill: none; stroke: #1f2937; stroke-width: 1.500; }

.main { width: 1652px; flex: none; }
.page-head { position: relative; height: 66px; padding: 0 15px 2px 16px; display: flex; align-items: center; justify-content: space-between; background: #fff; box-shadow: 0 2px 6px rgba(0, 0, 0, .2); }
.page-head h1 { font-size: 24px; line-height: 32px; letter-spacing: .15px; padding-top: 2px; }
.avatar { width: 34px; height: 34px; }
.content { padding: 31px 24px 0; }
.content h2 { font-size: 24px; line-height: 34px; letter-spacing: .2px; }
.mode { display: flex; align-items: center; height: 32px; margin-top: 23px; padding-left: 3px; font-size: 16px; color: #3b82f6; }
.m-user { width: 26px; height: 26px; }
.m-arrow { width: 24px; height: 20px; margin: 0 6px 0 7px; }
.m-rupee { width: 28px; height: 28px; margin-right: 10px; }
.mode .bar { width: 13px; }

.cards { display: grid; grid-template-columns: repeat(5, 308px); gap: 16px; margin-top: 24px; }
.card { height: 100px; border-radius: 8px; background: #fff; box-shadow: 0 3px 5px rgba(0, 0, 0, .15); padding: 0 8px 0 10px; display: grid; grid-template-columns: 80px 1fr; grid-template-rows: 61px 39px; column-gap: 10px; }
.badge { background: #3b82f6; border-radius: 0 0 8px 8px; box-shadow: 0 2px 5px rgba(0, 0, 0, .15); display: flex; align-items: center; justify-content: center; }
.badge svg { width: 28px; height: 28px; fill: none; stroke: #fff; stroke-width: 2; }
.badge .thin { stroke-width: 1.500; stroke-opacity: .9; }
.card h3 { font-size: 20px; line-height: 28px; padding-top: 8px; letter-spacing: .15px; }
.vals { grid-column: 2; display: flex; justify-content: space-between; padding: 5px 0 0 6px; font-size: 16px; line-height: 24px; color: #3b82f6; }

.panel { margin-top: 24px; height: 700px; border-radius: 16px; background: #fff; padding: 24px; box-shadow: 0 10px 25px rgba(0, 0, 0, .12); }
.panel-head { height: 64px; padding-bottom: 14px; border-bottom: 2px solid #e5e7eb; display: flex; align-items: center; justify-content: space-between; }
.panel-head h3 { font-size: 20px; letter-spacing: .15px; padding-bottom: 1px; }
.download { width: 48px; height: 48px; border-radius: 50%; background: #1c64f2; display: flex; align-items: center; justify-content: center; }
.download svg { width: 20px; height: 20px; fill: none; stroke: #c3bdf8; stroke-width: 1.500; }
.chart { display: block; }
.lbl { font-family: "Liberation Sans", Arial, sans-serif; font-size: 12px; fill: #666; }

.scrollbar { width: 15px; flex: none; background: #f1f1f1; display: flex; flex-direction: column; align-items: center; }
.arrow { border: 4px solid transparent; height: 0; }
.up { border-top: 0; border-bottom-color: #a3a3a3; margin: 6px 0 5px; }
.thumb { width: 11px; height: 646px; background: #c1c1c1; }
.down { border-bottom: 0; border-top-color: #505050; margin-top: auto; margin-bottom: 5px; }
```
